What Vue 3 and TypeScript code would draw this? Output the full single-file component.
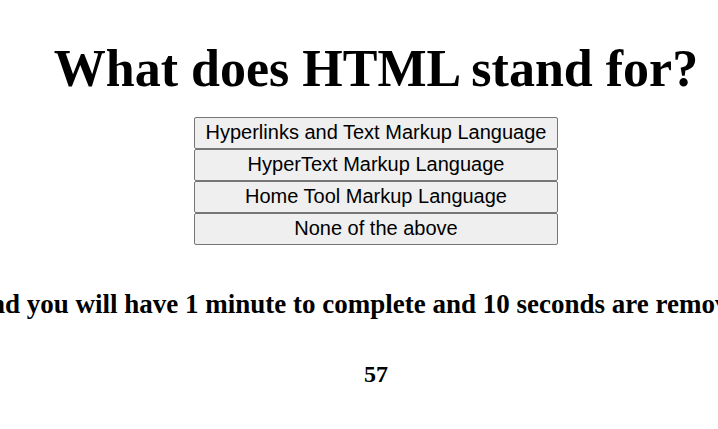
<script setup lang="ts">
import { ref } from 'vue'

const question = 'What does HTML stand for?'
const choices: string[] = [
  'Hyperlinks and Text Markup Language',
  'HyperText Markup Language',
  'Home Tool Markup Language',
  'None of the above',
]
const timeLeft = ref(57)
</script>

<template>
  <main class="quiz">
    <h1 class="question">{{ question }}</h1>
    <div class="choices">
      <button v-for="choice in choices" :key="choice" type="button" class="choice">{{ choice }}</button>
    </div>
    <h3 class="rules">and you will have 1 minute to complete and 10 seconds are removed</h3>
    <h4 class="timer">{{ timeLeft }}</h4>
  </main>
</template>

<style>
body {
  margin: 0;
  background: #fff;
  overflow: hidden;
}
</style>

<style scoped>
.quiz {
  display: flex;
  flex-direction: column;
  align-items: center;
  padding: 38px 0 0 34px;
  overflow: hidden;
  color: #000;
  font-family: "Liberation Serif", "Times New Roman", serif;
}

.question {
  margin: 0;
  font-size: 52px;
  line-height: 62px;
  white-space: nowrap;
}

.choices {
  display: flex;
  flex-direction: column;
  margin-top: 17px;
}

.choice {
  height: 32px;
  padding: 0 11px 2px;
  border: 1px solid #767676;
  border-radius: 2px;
  background: #efefef;
  color: #000;
  font-family: "Liberation Sans", Arial, sans-serif;
  font-size: 20px;
  line-height: 28px;
}

.rules {
  margin: 43px 0 0;
  padding-right: 20px;
  font-size: 27px;
  line-height: 32px;
  white-space: nowrap;
}

.timer {
  margin: 40px 0 0;
  font-size: 24px;
  line-height: 28px;
}
</style>
